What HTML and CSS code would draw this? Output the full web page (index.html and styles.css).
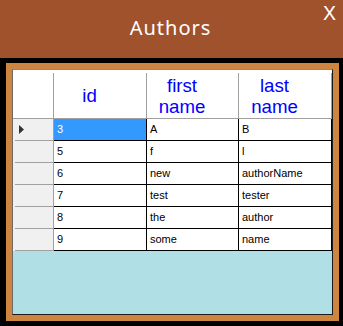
FILE: index.html
```html
<!DOCTYPE html>
<html lang="en">
<head>
<meta charset="utf-8">
<title>Authors</title>
<link rel="stylesheet" href="styles.css">
</head>
<body>
<div class="window">
  <div class="titlebar">
    <span class="spacer"></span>
    <h1 class="title">Authors</h1>
    <span class="close">X</span>
  </div>
  <div class="frame">
    <div class="panel">
      <div class="gridview">
        <div class="table">
          <div class="hcell corner"></div>
          <div class="hcell">id</div>
          <div class="hcell">first name</div>
          <div class="hcell">last name</div>

          <div class="rhead current"><svg class="arrow" width="5" height="9" viewBox="0 0 5 9"><polygon points="0,0 5,4.5 0,9" fill="#333"/></svg></div>
          <div class="cell selected">3</div>
          <div class="cell">A</div>
          <div class="cell">B</div>

          <div class="rhead"></div>
          <div class="cell">5</div>
          <div class="cell">f</div>
          <div class="cell">l</div>

          <div class="rhead"></div>
          <div class="cell">6</div>
          <div class="cell">new</div>
          <div class="cell">authorName</div>

          <div class="rhead"></div>
          <div class="cell">7</div>
          <div class="cell">test</div>
          <div class="cell">tester</div>

          <div class="rhead"></div>
          <div class="cell">8</div>
          <div class="cell">the</div>
          <div class="cell">author</div>

          <div class="rhead"></div>
          <div class="cell">9</div>
          <div class="cell">some</div>
          <div class="cell">name</div>
        </div>
      </div>
    </div>
  </div>
</div>
</body>
</html>
```
FILE: styles.css
```css
* { box-sizing: border-box; }
html, body { margin: 0; padding: 0; }
body { background: #000; }

.window {
  width: 343px;
  height: 326px;
  display: flex;
  flex-direction: column;
  background: #000;
}

.titlebar {
  height: 58px;
  flex: none;
  background: #A0522D;
  display: grid;
  grid-template-columns: 1fr auto 1fr;
  align-items: start;
}

.title {
  margin: 18px 0 0 0;
  font-family: "Noto Sans", sans-serif;
  font-weight: normal;
  font-size: 20px;
  line-height: 1;
  letter-spacing: 1px;
  color: #fff;
  transform: translateX(-1px);
}

.close {
  justify-self: end;
  margin: 4px 7px 0 0;
  font-family: "Liberation Sans", Arial, sans-serif;
  font-size: 19.5px;
  line-height: 1;
  color: #fff;
}

.frame {
  flex: 1;
  padding: 5px 4px 5px 6px;
  display: flex;
}

.panel {
  flex: 1;
  background: #CD853F;
  padding: 6px;
  display: flex;
}

.gridview {
  flex: 1;
  border: 1px solid #1a1a1a;
  border-top-color: #8a8a8a;
  border-left-color: #6a6a6a;
  background: #B0E0E6;
}

.table {
  display: grid;
  grid-template-columns: 41px 93px 92px 93px;
  grid-template-rows: 49px repeat(6, 22px);
  font-family: "Liberation Sans", Arial, sans-serif;
}

.hcell {
  background-color: #fff;
  background-image: linear-gradient(#A0A0A0, #A0A0A0);
  background-size: 1px calc(100% - 3px);
  background-position: right bottom;
  background-repeat: no-repeat;
  border-bottom: 1px solid #A0A0A0;
  color: #0000FF;
  font-size: 18.67px;
  line-height: 21px;
  text-align: center;
  padding: 3px 22px 0 0;
  display: flex;
  align-items: center;
  justify-content: center;
}

.rhead {
  background-color: #F0F0F0;
  background-image: linear-gradient(#A0A0A0, #A0A0A0);
  background-size: calc(100% - 2px) 1px;
  background-position: right bottom;
  background-repeat: no-repeat;
  border-right: 1px solid #A0A0A0;
  display: flex;
  align-items: center;
  padding: 0 0 1px 6px;
}

.arrow { display: block; }

.cell {
  background: #fff;
  border-right: 1px solid #000;
  border-bottom: 1px solid #000;
  font-size: 11px;
  line-height: 21px;
  color: #000;
  padding-left: 3px;
  white-space: nowrap;
  overflow: hidden;
}

.cell.selected {
  background: #3399FF;
  color: #fff;
}
```
